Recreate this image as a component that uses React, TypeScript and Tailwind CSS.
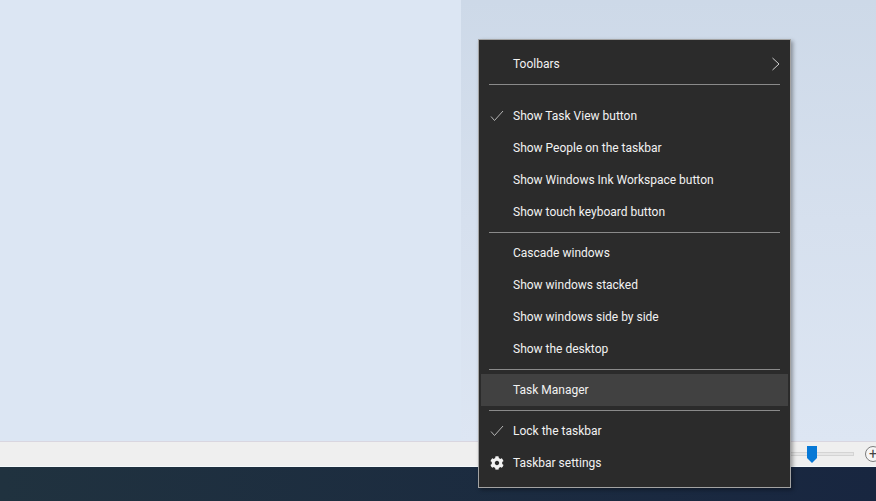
import React from 'react';
import { FaCog } from 'react-icons/fa';

type MenuRow = { label: string; icon?: 'check' | 'gear'; arrow?: boolean; active?: boolean };

const groups: { rows: MenuRow[]; before?: string }[] = [
  { rows: [{ label: 'Toolbars', arrow: true }] },
  {
    before: 'pt-[11px]',
    rows: [
      { label: 'Show Task View button', icon: 'check' },
      { label: 'Show People on the taskbar' },
      { label: 'Show Windows Ink Workspace button' },
      { label: 'Show touch keyboard button' },
    ],
  },
  {
    rows: [
      { label: 'Cascade windows' },
      { label: 'Show windows stacked' },
      { label: 'Show windows side by side' },
      { label: 'Show the desktop' },
    ],
  },
  { rows: [{ label: 'Task Manager', active: true }] },
  {
    rows: [
      { label: 'Lock the taskbar', icon: 'check' },
      { label: 'Taskbar settings', icon: 'gear' },
    ],
  },
];

function Row({ row }: { row: MenuRow }) {
  return (
    <div className={`relative flex h-8 items-center pl-[32px] text-[12px] text-[#f2f2f2] ${row.active ? 'bg-[#414141]' : ''}`}>
      {row.icon === 'check' && (
        <svg className="absolute left-[9px] top-[10px]" width="14" height="12" viewBox="0 0 14 12" fill="none" stroke="#b5b5b5" strokeWidth="1">
          <path d="M1 6.5 L4.5 10.5 L13 1" />
        </svg>
      )}
      {row.icon === 'gear' && (
        <FaCog className="absolute left-[9px] top-[9px] text-[#f2f2f2]" size={14} />
      )}
      <span>{row.label}</span>
      {row.arrow && (
        <svg className="absolute left-[290px] top-[9px]" width="10" height="14" viewBox="0 0 10 14" fill="none" stroke="#cfcfcf" strokeWidth="1">
          <path d="M1.5 1 L8 7 L1.5 13" />
        </svg>
      )}
    </div>
  );
}

function ContextMenu() {
  return (
    <div className="absolute left-[478px] top-[39px] h-[449px] w-[313px] border border-[#a3a3a3] bg-[#2b2b2b] px-[2px] py-[8px] shadow-[2px_2px_4px_rgba(0,0,0,0.35)]">
      {groups.map((group, i) => (
        <div key={i}>
          {i > 0 && <div className="mx-[8px] my-[4px] h-px bg-[#8a8a8a]" />}
          <div className={group.before}>
            {group.rows.map((row) => (
              <Row key={row.label} row={row} />
            ))}
          </div>
        </div>
      ))}
    </div>
  );
}

export default function App() {
  return (
    <div className="relative flex h-[501px] w-[876px] flex-col overflow-hidden font-['Roboto',sans-serif]">
      <div className="flex h-[441px]">
        <div className="w-[461px] bg-[#dce6f3]" />
        <div className="flex-1 bg-gradient-to-b from-[#cdd9e8] via-[#d6e0ee] to-[#dde6f3]" />
      </div>
      <div className="flex h-[26px] items-center justify-end border-t border-b border-t-[#d9d6e0] border-b-[#f4f9fb] bg-[#efefef]">
        <div className="relative mr-[11px] h-[4px] w-[66px] shrink-0 border border-[#d4d4d4] bg-[#e6e6e6]">
          <svg className="absolute left-[18px] top-[-7px]" width="10" height="17" viewBox="0 0 10 17">
            <path d="M0 0 H10 V12 L5 17 L0 12 Z" fill="#0678d6" />
          </svg>
        </div>
        <div className="mr-[-5px] flex h-[16px] w-[16px] shrink-0 items-center justify-center rounded-full border border-[#7d7d7d] bg-[#f6f6f6] text-[14px] leading-none text-[#444]">
          +
        </div>
      </div>
      <div className="flex-1 bg-gradient-to-r from-[#20323f] to-[#182640]" />
      <ContextMenu />
    </div>
  );
}
